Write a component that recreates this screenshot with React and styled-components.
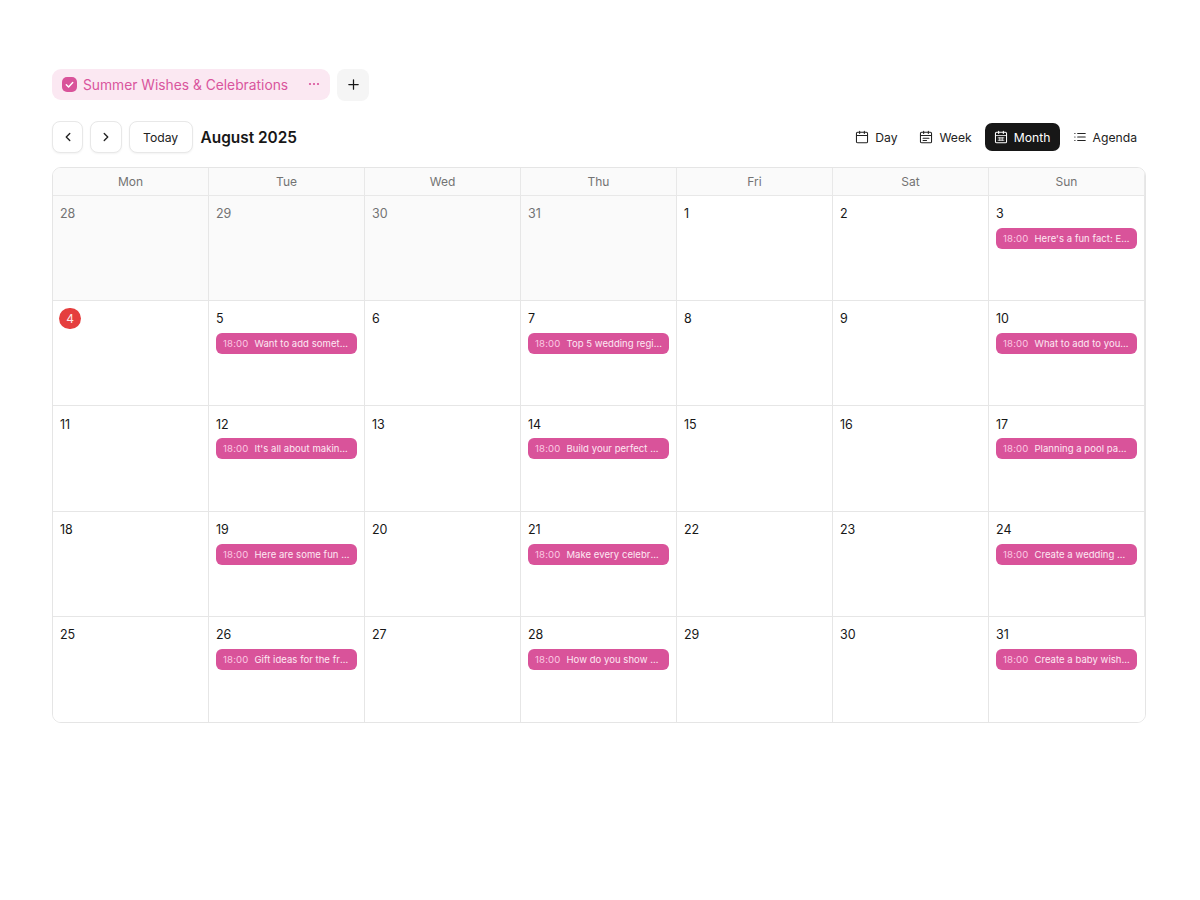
import React from "react";
import styled, { createGlobalStyle } from "styled-components";

const Global = createGlobalStyle`
  html, body { margin: 0; padding: 0; background: #fff; }
  body { font-family: Inter, "Liberation Sans", sans-serif; color: #171717; }
`;

const Page = styled.div`
  padding: 68.7px 54px 0 52px;
  display: flex;
  flex-direction: column;
`;
const TabRow = styled.div`
  display: flex;
  align-items: flex-start;
  gap: 7px;
  height: 32.3px;
`;
const Tab = styled.div`
  width: 278px;
  height: 31.3px;
  box-sizing: border-box;
  background: #fbe8f2;
  border-radius: 9px;
  display: flex;
  align-items: center;
  padding: 0 9px 0 10px;
  color: #d9559d;
  font-size: 13.8px;
`;
const Check = styled.span`
  width: 15px;
  height: 15px;
  border-radius: 5px;
  background: #d9539a;
  display: flex;
  align-items: center;
  justify-content: center;
  margin-right: 6px;
`;
const TabLabel = styled.span`
  flex: 1;
  margin-top: 1.5px;
`;
const PlusButton = styled.div`
  width: 32.3px;
  height: 32.3px;
  border-radius: 8px;
  background: #f5f5f5;
  display: flex;
  align-items: center;
  justify-content: center;
`;
const Toolbar = styled.div`
  margin-top: 20.3px;
  height: 31.4px;
  display: flex;
  align-items: center;
`;
const NavButton = styled.div`
  width: ${(p) => p.$w || 31.3}px;
  height: 31.4px;
  box-sizing: border-box;
  margin-right: 7px;
  padding-top: 1px;
  border: 1px solid #e8e8e8;
  border-radius: 8px;
  background: #fff;
  box-shadow: 0 1px 2px rgba(0, 0, 0, 0.05);
  display: flex;
  align-items: center;
  justify-content: center;
  font-size: 12.2px;
  font-weight: 400;
  color: #222;
`;
const Title = styled.h1`
  margin: 2px 0 0 1px;
  font-size: 15.4px;
  font-weight: 600;
  line-height: 32px;
  color: #171717;
`;
const Views = styled.div`
  margin-left: auto;
  display: flex;
  align-items: center;
  gap: 4px;
`;
const ViewButton = styled.div`
  height: 28px;
  box-sizing: border-box;
  padding: 1px 9px 0;
  border-radius: 7px;
  display: flex;
  align-items: center;
  gap: 6px;
  font-size: 12.2px;
  font-weight: 400;
  background: ${(p) => (p.$active ? "#171717" : "transparent")};
  color: ${(p) => (p.$active ? "#fff" : "#222")};
`;
const Calendar = styled.div`
  margin-top: 14px;
  height: 556px;
  box-sizing: border-box;
  border: 1px solid #e5e5e5;
  border-radius: 9px;
  overflow: hidden;
  display: grid;
  grid-template-columns: repeat(7, 156px);
  grid-template-rows: 28px repeat(5, 105.4px);
`;
const HeadCell = styled.div`
  background: #fafafa;
  border-right: 1px solid #e8e8e8;
  border-bottom: 1px solid #e8e8e8;
  box-sizing: border-box;
  display: flex;
  align-items: center;
  justify-content: center;
  font-size: 12px;
  color: #737373;
`;
const Cell = styled.div`
  box-sizing: border-box;
  min-width: 0;
  border-right: 1px solid ${(p) => (p.$corner ? "transparent" : "#e6e6e6")};
  border-bottom: 1px solid ${(p) => (p.$corner ? "transparent" : "#e6e6e6")};
  background: ${(p) => (p.$muted ? "#fafafa" : "#fff")};
  padding: 6.9px 7px 0;
`;
const DayNum = styled.div`
  height: 21.4px;
  display: flex;
  align-items: center;
  font-size: 12.5px;
  color: ${(p) => (p.$muted ? "#737373" : "#171717")};
`;
const Today = styled.span`
  width: 21.4px;
  height: 21.4px;
  margin-left: -0.7px;
  border-radius: 50%;
  background: #e53e3e;
  color: #fde8e8;
  display: flex;
  align-items: center;
  justify-content: center;
  font-size: 12px;
`;
const Event = styled.div`
  margin-top: 3.6px;
  height: 21px;
  box-sizing: border-box;
  border-radius: 6px;
  background: #d9539a;
  padding: 5px 7px 0;
  font-size: 9.5px;
  letter-spacing: 0.05px;
  color: #fde9f3;
`;
const EventText = styled.div`
  height: 11px;
  line-height: 12px;
  white-space: nowrap;
  overflow: hidden;
  text-overflow: ellipsis;
`;
const Time = styled.span`
  color: #fbc9e2;
  font-size: 9.6px;
  letter-spacing: 0.15px;
  margin-right: 6px;
`;

const Svg = ({ size = 15, sw = 1.5, children }) => (
  <svg width={size} height={size} viewBox="0 0 24 24" fill="none" stroke="currentColor" strokeWidth={sw} strokeLinecap="round" strokeLinejoin="round">
    {children}
  </svg>
);
const CalBase = () => (
  <>
    <rect x="2.5" y="4" width="19" height="18" rx="2" />
    <path d="M8 2v4M16 2v4" />
  </>
);
const DayIcon = () => <Svg size={14} sw={1.8}><CalBase /><path d="M2.5 9.5h19" /></Svg>;
const WeekIcon = () => <Svg size={14} sw={1.8}><CalBase /><path d="M2.5 9.5h19M7 14h10M7 18h6" /></Svg>;
const MonthIcon = () => (
  <Svg size={14} sw={1.8}><CalBase /><path d="M2.5 9.5h19M7 13.5h10M7 17.5h10M10 13v5M14 13v5" strokeWidth="1.4" /></Svg>
);
const AgendaIcon = () => <Svg size={14} sw={1.8}><path d="M8 6h13M8 12h13M8 18h13M3 6h.5M3 12h.5M3 18h.5" /></Svg>;

const events = {
  3: "Here's a fun fact: Every wedding",
  5: "Want to add something special",
  7: "Top 5 wedding registry ideas",
  10: "What to add to your summer list",
  12: "It's all about making memories",
  14: "Build your perfect wedding list",
  17: "Planning a pool party this year",
  19: "Here are some fun ideas to try",
  21: "Make every celebration special",
  24: "Create a wedding wish list now",
  26: "Gift ideas for the friends you love",
  28: "How do you show your love today",
  31: "Create a baby wish list today",
};
const days = ["Mon", "Tue", "Wed", "Thu", "Fri", "Sat", "Sun"];
const cells = [
  ...[28, 29, 30, 31].map((d) => ({ d, muted: true })),
  ...Array.from({ length: 31 }, (_, i) => ({ d: i + 1 })),
];

export default function App() {
  return (
    <Page>
      <Global />
      <TabRow>
        <Tab>
          <Check>
            <svg width="11" height="11" viewBox="0 0 24 24" fill="none" stroke="#fff" strokeWidth="3.2" strokeLinecap="round" strokeLinejoin="round">
              <path d="M5 12.5l5 5 9-10" />
            </svg>
          </Check>
          <TabLabel>Summer Wishes &amp; Celebrations</TabLabel>
          <svg width="14" height="14" viewBox="0 0 14 14" fill="#d9509a">
            <circle cx="3" cy="7" r="1.1" /><circle cx="7" cy="7" r="1.1" /><circle cx="11" cy="7" r="1.1" />
          </svg>
        </Tab>
        <PlusButton>
          <Svg size={15} sw={2}><path d="M12 4.5v15M4.5 12h15" /></Svg>
        </PlusButton>
      </TabRow>
      <Toolbar>
        <NavButton><Svg size={14} sw={2.4}><path d="M15 6l-6 6 6 6" /></Svg></NavButton>
        <NavButton><Svg size={14} sw={2.4}><path d="M9 6l6 6-6 6" /></Svg></NavButton>
        <NavButton $w={64}>Today</NavButton>
        <Title>August 2025</Title>
        <Views>
          <ViewButton><DayIcon />Day</ViewButton>
          <ViewButton><WeekIcon />Week</ViewButton>
          <ViewButton $active><MonthIcon />Month</ViewButton>
          <ViewButton><AgendaIcon />Agenda</ViewButton>
        </Views>
      </Toolbar>
      <Calendar>
        {days.map((d) => <HeadCell key={d}>{d}</HeadCell>)}
        {cells.map((c, i) => (
          <Cell key={i} $muted={c.muted} $corner={i === 34}>
            <DayNum $muted={c.muted}>
              {!c.muted && c.d === 4 ? <Today>4</Today> : c.d}
            </DayNum>
            {!c.muted && events[c.d] && (
              <Event><EventText><Time>18:00</Time>{events[c.d]}</EventText></Event>
            )}
          </Cell>
        ))}
      </Calendar>
    </Page>
  );
}
